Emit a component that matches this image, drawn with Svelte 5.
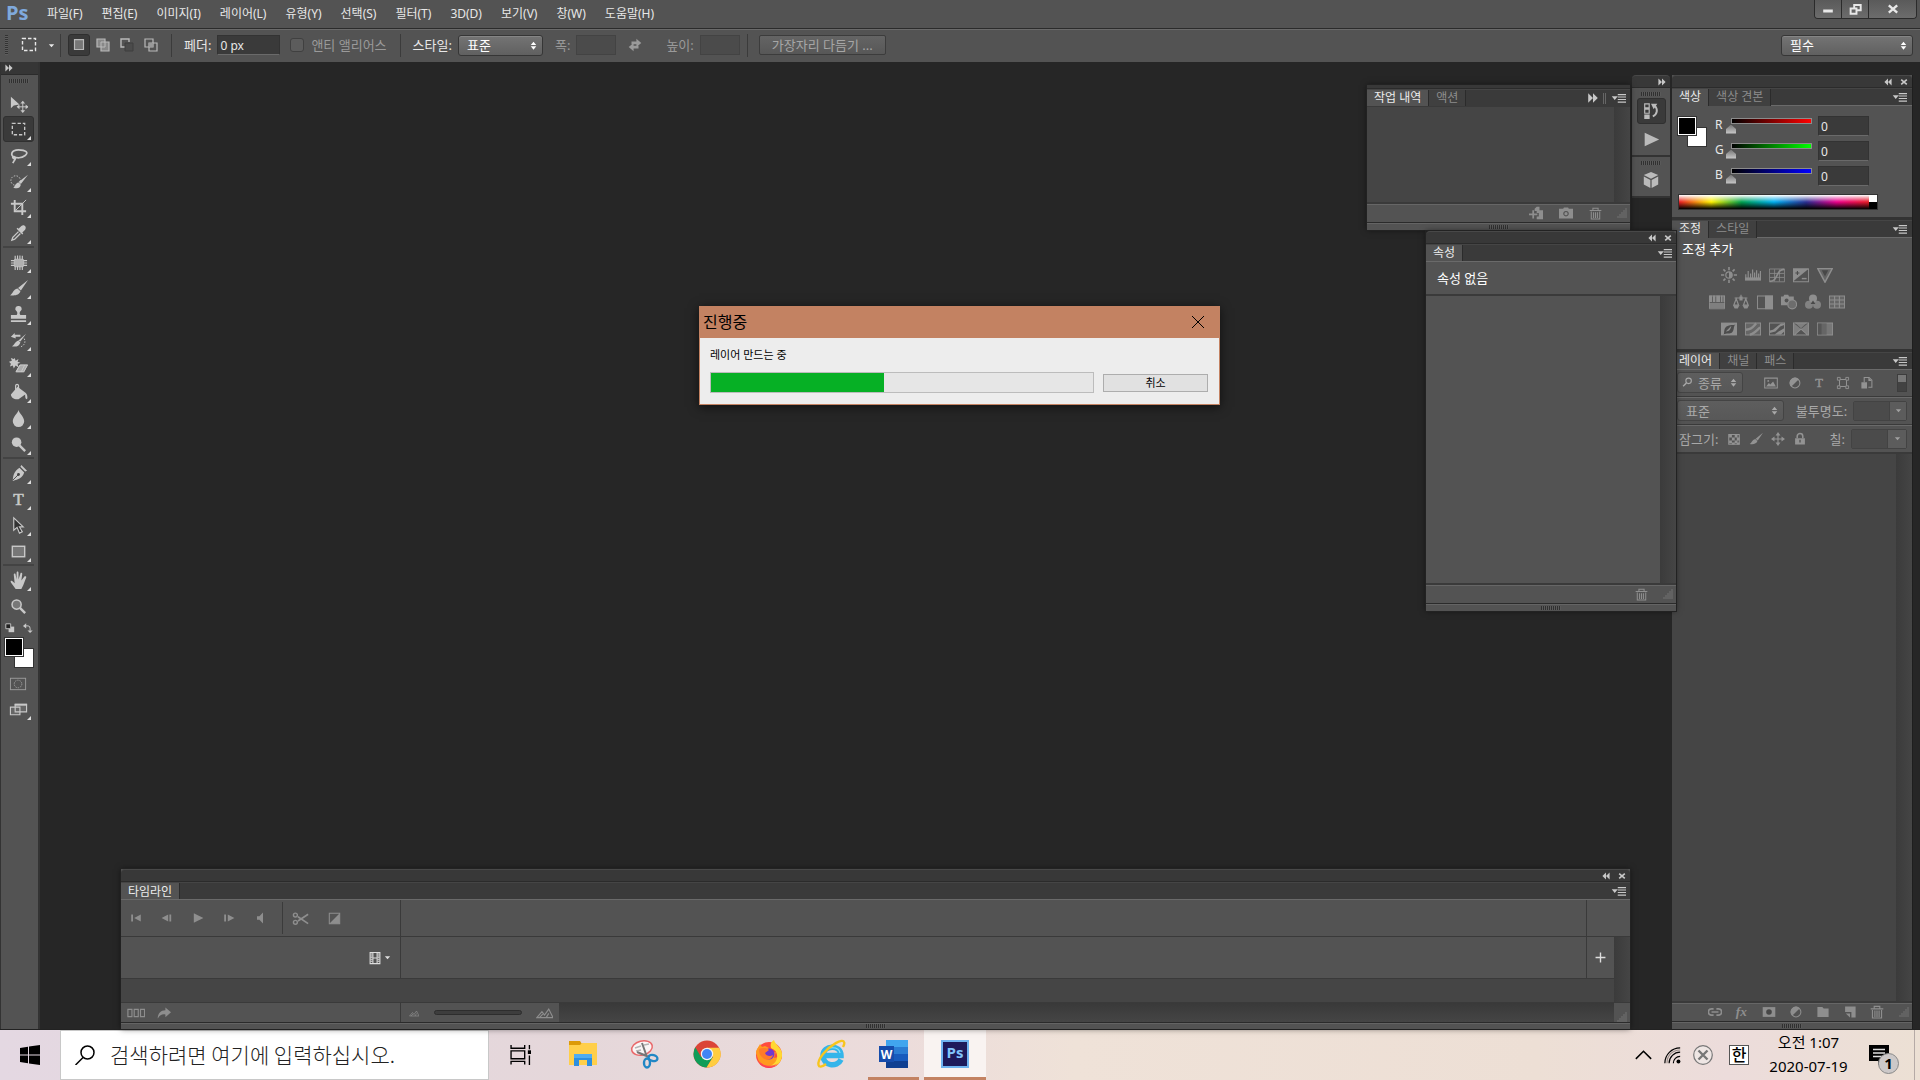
<script lang="ts">
  type Tool = { name: string; label: string; more?: boolean };

  const menus = [
    '파일(F)', '편집(E)', '이미지(I)', '레이어(L)', '유형(Y)', '선택(S)',
    '필터(T)', '3D(D)', '보기(V)', '창(W)', '도움말(H)',
  ];

  // Toolbox, split where the separators go.
  const toolGroups: Tool[][] = [
    [
      { name: 'move', label: '이동' },
      { name: 'marquee', label: '사각형 선택 윤곽', more: true },
      { name: 'lasso', label: '올가미', more: true },
      { name: 'quick', label: '빠른 선택', more: true },
      { name: 'crop', label: '자르기', more: true },
      { name: 'eyedropper', label: '스포이드', more: true },
    ],
    [
      { name: 'heal', label: '스팟 복구 브러시', more: true },
      { name: 'brush', label: '브러시', more: true },
      { name: 'stamp', label: '복제 도장', more: true },
      { name: 'history', label: '작업 내역 브러시', more: true },
      { name: 'eraser', label: '지우개', more: true },
      { name: 'bucket', label: '페인트 통', more: true },
      { name: 'drop', label: '흐림 효과', more: true },
      { name: 'dodge', label: '닷지', more: true },
    ],
    [
      { name: 'pen', label: '펜', more: true },
      { name: 'type', label: '문자', more: true },
      { name: 'select', label: '패스 선택', more: true },
      { name: 'rect', label: '사각형', more: true },
    ],
    [
      { name: 'hand', label: '손', more: true },
      { name: 'zoom', label: '돋보기' },
    ],
  ];

  const adjustments = [
    ['sun', 'levels', 'curves', 'exposure', 'vibrance'],
    ['hue', 'balance', 'bw', 'photo', 'mixer', 'lookup'],
    ['invert', 'poster', 'threshold', 'selective', 'gradient'],
  ];

  const filters = ['image', 'adjust', 'type', 'shape', 'smart'];
  const locks = ['checker', 'brush', 'cross', 'lock'];
  const layerActions = ['link', 'fx', 'mask', 'adjust', 'folder', 'newpage', 'trash'];
  const transport = ['first', 'prev', 'play', 'next', 'speaker'];
  const apps = ['explorer', 'snip', 'chrome', 'firefox', 'ie', 'word', 'ps'];

  let activeTool = $state('marquee');
  let rgb = $state([
    { key: 'R', value: 0 },
    { key: 'G', value: 0 },
    { key: 'B', value: 0 },
  ]);

  // Glyph bodies, all on a 20 x 20 box.
  const icons: Record<string, string> = {
    move: '<path fill="currentColor" d="M2 3v12l3-3 6-1z"/><path stroke="currentColor" d="M14.500 8v11M9 13.500h11"/><path fill="currentColor" d="M14.500 7l2.500 3h-5zM14.500 20l2.500-3h-5zM8 13.500l3-2.500v5zM20.500 13.500l-3-2.500v5z"/>',
    marquee: '<rect x="3.500" y="3.500" width="13" height="12" fill="none" stroke="currentColor" stroke-width="1.400" stroke-dasharray="3.500 2"/>',
    lasso: '<path fill="none" stroke="currentColor" stroke-width="1.800" d="M6 12C1 10 2 4 10 4s11 3 7 6-9 3-12 1c-2-1-1 3 1 2s-1 3-2 5"/>',
    quick: '<circle cx="7" cy="9" r="5" fill="none" stroke="currentColor" stroke-dasharray="1.500 1.500"/><path fill="currentColor" d="M20 3l-7.500 9.500-2.500-2zM10 11l2.500 2.500c-1 4-4 4-8 3 2-1 2-5 5.500-5.500z"/>',
    crop: '<path fill="none" stroke="currentColor" stroke-width="2" d="M6 2v12h12M2 6h12v12"/><path stroke="currentColor" d="M7 13L18 2"/>',
    eyedropper: '<path fill="currentColor" d="M13 2c3-2 6 1 4 4l-3 3 1 1-1 1-6-6 1-1 1 1z"/><path fill="none" stroke="currentColor" stroke-width="1.400" d="M10 8l-6 6-1 3 3-1 6-6"/>',
    heal: '<rect x="5" y="6" width="11" height="9" rx="2" fill="currentColor" opacity=".8"/><path stroke="currentColor" stroke-width="1.200" d="M6.500 3v4M9 2.500v4M11.500 2.500v4M14 3v4M6.500 14v4M9 14v4M11.500 14v4M14 14v4M2 8h4M2 10.500h4M2 13h4M15 8h4M15 10.500h4M15 13h4"/>',
    brush: '<path fill="currentColor" d="M20 1l-7.500 11-3-2.500zM9 10l3 3c-1 4-6 5-11 4 3-1 3-6 8-7z"/>',
    stamp: '<path fill="currentColor" d="M10 1a3 3 0 0 1 2 5.500c-1 1-1 3 0 4h6v4H2v-4h6c1-1 1-3 0-4A3 3 0 0 1 10 1zM2 16h16v2H2z"/>',
    history: '<path fill="currentColor" d="M18 3l-6 8-2-1zM10 10l2 2c-1 4-5 5-9 4 3-1 3-5 7-6zM2 6l4-4v2h6v2H7v2z"/><path fill="none" stroke="currentColor" stroke-dasharray="1.500 1.500" d="M16 8c2 4 0 8-5 9"/>',
    eraser: '<path fill="currentColor" d="M6 1l1 3 3-2-1 3 3 1-3 1 1 4-3-2-2 3-1-3-3 1 1-3-2-2 3-1-1-3 3 1z"/><path fill="currentColor" opacity=".75" d="M12 8h8l-4 8H7z"/><path fill="none" stroke="currentColor" d="M11.500 8.500h8l-4 7h-8zM7.500 15.500l4-7M13 15.500l3.500-7"/>',
    bucket: '<path fill="currentColor" d="M9 4l8 6c2 1 3 5 2 7-2 0-2-3-2-5l-7 5c-4 1-8-2-8-5z"/><path fill="none" stroke="currentColor" stroke-width="1.300" d="M10 10V3c0-2-3-2-3 0v4"/>',
    drop: '<path fill="currentColor" d="M10 1c1 4 6 7 6 12a6 6 0 0 1-12 0C4 8 9 5 10 1z"/>',
    dodge: '<circle cx="8" cy="7.500" r="5" fill="currentColor"/><path stroke="currentColor" stroke-width="2.500" d="M11 11l6 6"/>',
    pen: '<path fill="currentColor" d="M13 1l6 6-2 1-5-5zM11 4l5 5c-2 6-6 7-12 9 0-6 2-11 7-14z"/><path stroke="#444" d="M4 17l6-6"/><circle cx="10" cy="11" r="1.500" fill="#444"/>',
    type: '<text x="10" y="16" text-anchor="middle" font-family="Liberation Serif" font-size="18" fill="currentColor" stroke="currentColor" stroke-width=".6">T</text>',
    select: '<path fill="#333" stroke="currentColor" stroke-width="1.200" d="M5 2v13l3.500-3 2.500 6 3-1.500-3-5h4z"/>',
    rect: '<rect x="3.500" y="4.500" width="13" height="11" fill="#777" stroke="currentColor" stroke-width="1.500"/>',
    hand: '<path fill="currentColor" d="M7 19L2 12c-1-2 1-2 2-1l2 2-1-9c0-2 2-2 2 0l1 5V2c0-2 2-2 2 0v7l2-6c0-2 2-1 2 0l-1 7 3-4c1-1 3 0 2 1l-3 8-2 4z"/>',
    zoom: '<circle cx="8" cy="8" r="4.800" fill="#777" stroke="currentColor" stroke-width="1.600"/><path stroke="currentColor" stroke-width="2.500" d="M11.500 11.500L17 17"/>',
    defaults: '<path fill="currentColor" d="M8 8h8v8H8z"/><path fill="#222" stroke="currentColor" stroke-width="1.300" d="M4 4h7v7H4z"/>',
    swap: '<path fill="none" stroke="currentColor" stroke-width="1.500" d="M7 6h4q3 0 3 4v3"/><path fill="currentColor" d="M3 6l5-4v8zM14 17l-4-4h8z"/>',
    quickmask: '<rect x="1.500" y="4.500" width="16" height="12" fill="none" stroke="currentColor"/><circle cx="9.500" cy="10.500" r="4" fill="none" stroke="currentColor" stroke-dasharray="1.500 1"/>',
    screen: '<path fill="#666" stroke="currentColor" stroke-width="1.200" d="M1.500 7.500h10v8h-10zM6.500 4.500h12v8h-12z"/><path stroke="currentColor" stroke-width="2" d="M6 5h13"/>',
    selNew: '<path fill="#777" stroke="currentColor" stroke-width="1.300" d="M5 4h10v11H5z"/>',
    selAdd: '<path fill="#888" stroke="currentColor" stroke-width="1.200" d="M4 4h8v3h4v9H8v-4H4z"/><path fill="none" stroke="currentColor" d="M8 7h4v5H8z"/>',
    selSub: '<path fill="none" stroke="currentColor" stroke-width="1.400" d="M8 12H4V4h8v3"/><path fill="#4b4b4b" stroke="#3f3f3f" d="M8 8h8v8H8z"/>',
    selInt: '<path fill="none" stroke="currentColor" stroke-width="1.200" d="M4 4h8v8H4zM8 8h8v8H8z"/><path fill="#999" d="M8 8h4v4H8z"/>',
    exchange: '<path fill="currentColor" d="M5 5h7V1l7 6-7 6V9H5zM15 15H8v4l-7-6 7-6v4h7z"/>',
    dblRight: '<path fill="currentColor" d="M4 4l6 6-6 6zM10 4l6 6-6 6z"/>',
    dblLeft: '<path fill="currentColor" d="M16 4l-6 6 6 6zM10 4l-6 6 6 6z"/>',
    close: '<path stroke="currentColor" stroke-width="4" d="M3 4l14 12M17 4L3 16"/>',
    menu: '<path fill="currentColor" d="M1 7h8l-4 5zM9 4h11v1.500H9zM9 7.300h11v1.500H9zM9 10.600h11v1.500H9zM9 14h11v1.500H9z"/>',
    caret: '<path fill="currentColor" d="M4 7h12l-6 7z"/>',
    spin: '<path fill="currentColor" d="M5 9l5-6 5 6zM5 11.500h10l-5 6z"/>',
    steps: '<path fill="none" stroke="currentColor" stroke-width="1.300" d="M3 2h5v4.500H3zM3 8h5v4.500H3z"/><path fill="currentColor" d="M2.500 14H8.500v5H2.500zM10 2h7L13 8z"/><path fill="none" stroke="currentColor" stroke-width="2.200" d="M14 4c4 4 3 10-2 12"/>',
    action: '<path fill="currentColor" d="M2 2l17 8-17 8z"/>',
    cube: '<path fill="currentColor" d="M10 1l8 3.500-8 4-8-4zM2 6l7.300 4v9L2 15zM18 6l-7.300 4v9L18 15z"/>',
    docplus: '<path fill="currentColor" d="M11 1h4v5h5v13h-9v-4h3v-5h-3V7H8V4z"/><path stroke="currentColor" stroke-width="2.500" d="M0 12h12M6 6v12"/>',
    camera: '<path fill="currentColor" fill-rule="evenodd" d="M0 4h6l1-2h6l1 2h6v14H0zM10 7a4 4 0 1 0 .01 0z"/><circle cx="10" cy="11" r="2.300" fill="currentColor"/>',
    trash: '<path fill="none" stroke="currentColor" stroke-width="1.600" d="M1 5.500h18M6 5V2h8v3M3.500 7v11.500h13V7M7 8v9M10 8v9M13 8v9"/>',
    corner: '<path fill="currentColor" d="M17 1h2v2h-2zM17 5h2v2h-2zM13 5h2v2h-2zM17 9h2v2h-2zM13 9h2v2h-2zM9 9h2v2H9zM17 13h2v2h-2zM13 13h2v2h-2zM9 13h2v2H9zM5 13h2v2H5zM17 17h2v2h-2zM13 17h2v2h-2zM9 17h2v2H9zM5 17h2v2H5zM1 17h2v2H1z"/>',
    sun: '<circle cx="10" cy="10" r="4" fill="none" stroke="currentColor" stroke-width="1.500"/><path fill="currentColor" d="M10 6a4 4 0 0 1 0 8z"/><path stroke="currentColor" stroke-width="2" d="M10 0v4M10 16v4M0 10h4M16 10h4M3 3l2.500 2.500M14.500 14.500L17 17M3 17l2.500-2.500M14.500 5.500L17 3"/>',
    levels: '<path fill="currentColor" d="M0 13h20v4H0z"/><path stroke="currentColor" stroke-width="1.500" d="M1 14V9M4 14V5M7 14V8M9.500 14V3M12 14V7M14.500 14V4M17 14V8M19.300 14V5"/>',
    curves: '<path fill="none" stroke="currentColor" d="M.5 2.500h19v16H.5zM7 3v15M13 3v15M1 8h18M1 13h18"/><path fill="none" stroke="currentColor" stroke-width="2" d="M1 18c11 0 7-15 18-15"/>',
    exposure: '<path fill="currentColor" d="M0 2h20L0 18z"/><path fill="none" stroke="currentColor" stroke-width="1.300" d="M.5 2.500h19v16H.5z"/><path stroke="#4b4b4b" stroke-width="1.300" d="M3 7.500h5M5.500 5v5"/><path stroke="currentColor" stroke-width="1.800" d="M11 14.500h6"/>',
    vibrance: '<path fill="#666" stroke="currentColor" stroke-width="1.800" d="M1 2h18l-9 17z"/><path fill="#484848" d="M6 4h8l-4 8z"/>',
    hue: '<path fill="currentColor" d="M0 11h20v7H0z" opacity=".75"/><path fill="currentColor" d="M0 2h4v8H0zM5 2h3v8H5zM9 2h5v8H9zM15 2h2v8h-2zM18 2h2v8h-2z"/><path fill="none" stroke="currentColor" d="M.5 2.500h19v16H.5z"/>',
    balance: '<path fill="none" stroke="currentColor" stroke-width="1.500" d="M2 5h16M10 1v5M4 6l-3 8h6zM16 6l-3 8h6z"/><path fill="currentColor" d="M0 14h8l-2 4H2zM12 14h8l-2 4h-4zM8 3h4v5H8z"/>',
    bw: '<path fill="none" stroke="currentColor" stroke-width="1.400" d="M.5 2.500h19v16H.5z"/><path fill="currentColor" d="M10 2h10v17H10z"/>',
    photo: '<path fill="currentColor" d="M0 3h3l1-2h5l1 2h6v5a6 6 0 0 0-8 6H0z"/><circle cx="7" cy="8" r="2.500" fill="#535353"/><circle cx="14" cy="13" r="5.500" fill="#6d6d6d" stroke="currentColor" stroke-width="1.500"/>',
    mixer: '<circle cx="10" cy="5.500" r="5" fill="currentColor"/><circle cx="5" cy="13.500" r="5" fill="currentColor" opacity=".8"/><circle cx="15" cy="13.500" r="5" fill="currentColor" opacity=".8"/><path fill="#484848" d="M10 8l3 4.500H7z"/>',
    lookup: '<path fill="#666" stroke="currentColor" stroke-width="1.400" d="M.5 2.500h19v15H.5zM7 2v16M13 2v16M1 7.500h18M1 12.500h18"/>',
    invert: '<path fill="currentColor" d="M0 2h20v16H0z"/><path fill="#4c4c4c" d="M3 17c2-1-1-9 6-11s6 0 9-2c-3 3-1 7-4 10s-7 0-11 3z"/><path fill="currentColor" d="M6 13l7-7c-1 4-2 7-7 7z"/>',
    poster: '<path fill="#666" stroke="currentColor" stroke-width="1.300" d="M.5 2.500h19v15H.5z"/><path fill="none" stroke="currentColor" stroke-width="3" d="M1 11c8 0 10-5 13-8M6 17c6-1 9-6 13-9"/>',
    threshold: '<path fill="none" stroke="currentColor" stroke-width="1.300" d="M.5 2.500h19v15H.5z"/><path fill="currentColor" d="M1 12l4-1 5-4 5-4h4v2l-5 2-6 6-7 2zM7 17l5-4 7-4v4l-4 4z"/>',
    selective: '<path fill="currentColor" d="M0 2v16l10-8zM20 2v16l-10-8zM2 2h16l-8 7z" opacity=".75"/><path fill="none" stroke="currentColor" stroke-width="1.300" d="M.5 2.500h19v15H.5zM1 18l9-8 9 8"/>',
    gradient: '<path fill="#777" stroke="currentColor" stroke-width="1.300" d="M.5 2.500h19v15H.5z"/><path fill="#555" d="M1 3h5v14H1z"/><path fill="#666" d="M6 3h6v14H6z"/>',
    search: '<circle cx="12" cy="7" r="5" fill="none" stroke="currentColor" stroke-width="2"/><path stroke="currentColor" stroke-width="2.500" d="M8 11l-6 6"/>',
    image: '<path fill="none" stroke="currentColor" stroke-width="1.500" d="M1 3h18v14H1z"/><path fill="currentColor" d="M3 15l4-5 2 2 4-4 4 7z"/><circle cx="6" cy="7" r="1.300" fill="currentColor"/>',
    adjust: '<circle cx="10" cy="10" r="7" fill="none" stroke="currentColor" stroke-width="1.500"/><path fill="currentColor" d="M15.500 4.500A7.500 7.500 0 1 0 4.500 15.500z"/>',
    shape: '<path fill="none" stroke="currentColor" stroke-width="1.400" d="M5 5h10v10H5z"/><path fill="#535353" stroke="currentColor" stroke-width="1.300" d="M2 2h4v4H2zM14 2h4v4h-4zM2 14h4v4H2zM14 14h4v4h-4z"/>',
    smart: '<path fill="none" stroke="currentColor" stroke-width="1.500" d="M6 9V2h7l4 4v10h-5"/><path fill="currentColor" d="M2 9h8v9H2zM12 2v5h5z"/>',
    checker: '<path fill="none" stroke="currentColor" stroke-width="1.500" d="M2.500 3.500h15v14h-15z"/><path fill="currentColor" d="M3 4h4v4H3zM11 4h4v4h-4zM7 8h4v4H7zM14 8h4v4h-4zM3 12h4v4H3zM11 12h4v4h-4zM7 15h4v3H7zM14 15h4v3h-4z"/>',
    cross: '<path stroke="currentColor" stroke-width="1.600" d="M10 3v14M3 10h14"/><path fill="currentColor" d="M10 0l3.500 5h-7zM10 20l3.500-5h-7zM0 10l5-3.500v7zM20 10l-5-3.500v7z"/>',
    lock: '<path fill="currentColor" fill-rule="evenodd" d="M3 9h14v9H3zM9 11v4h2v-4z"/><path fill="none" stroke="currentColor" stroke-width="2.200" d="M6 9V6c0-5 8-5 8 0v3"/>',
    link: '<path fill="none" stroke="currentColor" stroke-width="2.400" d="M8 14.500H5a4.500 4.500 0 0 1 0-9h3M12 5.500h3a4.500 4.500 0 0 1 0 9h-3M5 10h10"/>',
    fx: '<text x="9" y="15" text-anchor="middle" font-family="Liberation Serif" font-style="italic" font-weight="bold" font-size="19" fill="currentColor">fx</text>',
    mask: '<path fill="currentColor" d="M1 3h18v14H1z"/><circle cx="10" cy="10" r="4" fill="#474747"/>',
    folder: '<path fill="currentColor" d="M2 3h7l2 2h7v12H2z"/>',
    newpage: '<path fill="currentColor" d="M3 2h15v16h-6v-8H3z"/><path fill="currentColor" d="M4 12h6v6z"/>',
    first: '<path fill="currentColor" d="M2 4h3v12H2zM18 4v12L7 10z"/>',
    prev: '<path fill="currentColor" d="M12 4v12L1 10zM14 4h3v12h-3z"/>',
    play: '<path fill="currentColor" d="M3 2l16 8-16 8z"/>',
    next: '<path fill="currentColor" d="M2 4h3v12H2zM8 4l11 6-11 6z"/>',
    speaker: '<path fill="currentColor" d="M5 7h4l6-6v18l-6-6H5z"/>',
    scissors: '<path fill="none" stroke="currentColor" stroke-width="2" d="M7 8l12 8M7 13l12-8"/><circle cx="4" cy="6" r="2.300" fill="none" stroke="currentColor" stroke-width="1.700"/><circle cx="4" cy="14.500" r="2.300" fill="none" stroke="currentColor" stroke-width="1.700"/>',
    transition: '<path fill="none" stroke="currentColor" stroke-width="1.600" d="M2 2h16v16H2z"/><path fill="currentColor" d="M18 2v16H2z"/>',
    film: '<path fill="none" stroke="currentColor" stroke-width="1.500" d="M3 2h14v16H3zM7 2v16M13 2v16M7 10h6"/><path stroke="currentColor" stroke-width="3" stroke-dasharray="1.500 1.500" d="M5 2v16M15 2v16"/>',
    frames: '<path fill="none" stroke="currentColor" stroke-width="1.300" d="M1 6h4.500v8H1zM8 6h4.500v8H8zM15 6h4.500v8H15z"/>',
    share: '<path fill="currentColor" d="M12 2l8 7-8 7v-4c-5-1-8 1-11 6C1 11 5 6 12 6z"/>',
    peaks: '<path fill="none" stroke="currentColor" stroke-width="1.400" d="M1 16l6-7 3 4 5-7 5 10zM4 16l4-4M12 16l3-5"/>',
    plus: '<path stroke="currentColor" stroke-width="2.500" d="M10 1v18M1 10h18"/>',
    min: '<path fill="currentColor" d="M2 11h16v5H2z"/>',
    restore: '<path fill="none" stroke="currentColor" stroke-width="3" d="M8 7V3h10v8h-5M2.500 8.500h9v8h-9z"/>',
    start: '<path fill="currentColor" d="M0 3l8-1.200v7.700H0zM9 1.600L20 0v9.500H9zM0 10.500h8v7.700L0 17zM9 10.500h11V20L9 18.400z"/>',
    find: '<circle cx="12.500" cy="7.500" r="6.500" fill="none" stroke="currentColor" stroke-width="1.500"/><path stroke="currentColor" stroke-width="1.500" d="M8 12.500L.5 20"/>',
    taskview: '<path fill="none" stroke="currentColor" stroke-width="1.300" d="M1 1v3h13V1M1 6.500h13v7.500H1zM1 19.500v-3h13v3M18.500 1v4M18.500 11v9"/><path fill="currentColor" d="M17 6h3v3.500h-3z"/>',
    chevron: '<path fill="none" stroke="currentColor" stroke-width="1.800" d="M1 14l9-9 9 9"/>',
    wifi: '<g fill="none" stroke="currentColor" stroke-width="1.400"><path d="M1 19C1 9 9 1 19 1M6 19C6 12 12 6 19 6M11 19c0-4.500 3.500-8 8-8"/><path stroke="#998d89" d="M3.500 19C3.500 10 10 3.500 19 3.500"/></g><circle cx="17" cy="17" r="2.300" fill="currentColor"/>',
    blocked: '<circle cx="10" cy="10" r="9.300" fill="#eee6e4" stroke="#777" stroke-width="1.200"/><path stroke="#777" stroke-width="2.400" d="M5.500 5.500l9 9M14.500 5.500l-9 9"/>',
    notice: '<path fill="currentColor" d="M0 0h20v16h-7l-4 4v-4H0z"/><path stroke="#ddd" stroke-width="1.300" d="M4 4.500h12M4 8h12M4 11.500h12"/>',
  };

  // Taskbar applications, on a 28 x 28 box.
  const appIcons: Record<string, string> = {
    explorer: '<path fill="#dc9a08" d="M0 1h11l2 3v4H0z"/><path fill="#ffcf4a" d="M0 5h11l2-2h15v22H0z"/><path fill="#2d8fe0" d="M5 26V14h18v12h-5v-6h-8v6z"/><path fill="#4fadf2" d="M5 14h18v4H5z"/>',
    snip: '<ellipse cx="11" cy="8" rx="10.500" ry="7" transform="rotate(-14 11 8)" fill="#faf5f5" stroke="#e9696b" stroke-width="1.500"/><path stroke="#b5b5b5" stroke-width="1.500" d="M4 8l6-2M5 11l5-1M13 5l5-1"/><path stroke="#777" stroke-width="2" d="M11 3l5 14M6 12l12 5"/><g fill="none" stroke="#2187c5" stroke-width="2.400"><ellipse cx="22" cy="18" rx="4.500" ry="3" transform="rotate(15 22 18)"/><ellipse cx="16" cy="23" rx="3" ry="4.500"/></g>',
    chrome: '<circle cx="14" cy="14" r="13.500" fill="#db4437"/><path fill="#0f9d58" d="M2.300 7.300A13.500 13.500 0 0 0 13.500 27.500L20 17 8 17z"/><path fill="#ffcd40" d="M14 7.800h12.200A13.500 13.500 0 0 1 13.500 27.500L20 17z"/><circle cx="14" cy="14" r="6.200" fill="#f4f4f4"/><circle cx="14" cy="14" r="5" fill="#4285f4"/>',
    firefox: '<circle cx="14" cy="15" r="13" fill="#ff4b3e"/><path fill="#ff9a1f" d="M1 13C1 9 4 7 5 4l2 3 3-1 4 2-3 3 5 2 5-1-2 6 8-2A13 13 0 0 1 4 22z"/><path fill="#ffd832" d="M16 8c-1-4 0-6 3-8 1 5 9 8 8 16-1 9-8 11-14 11 6-2 10-7 9-12s-3-5-6-7z"/><circle cx="14" cy="14" r="5.500" fill="#7139cf"/><path fill="#ff7b2a" d="M4 9c3-1 7-2 10 1l-4 3c1 3 5 4 8 2-1 5-7 6-10 3s-4-4-4-9z"/><path fill="#ff365e" d="M3 20c5 7 15 7 20 3-5 7-16 7-20-3z" opacity=".8"/>',
    ie: '<path fill="none" stroke="#35b5ea" stroke-width="5.500" d="M24 19.500C20 28 6 26 6 15.500S24 4 24 15.500H7"/><path fill="none" stroke="#8be4fb" stroke-width="1.200" d="M8 13c1-7 14-7 15 0"/><path fill="none" stroke="#f7c51e" stroke-width="2.400" d="M9 24C0 31-1 23 6 14S26-2 27 2c1 1 0 3-1 5"/>',
    word: '<path fill="#41a5ee" d="M7 0h22v8H7z"/><path fill="#2b7cd3" d="M7 7h22v7H7z"/><path fill="#185abd" d="M7 14h22v7H7z"/><path fill="#103f91" d="M7 21h22v7H7z"/><path fill="#164cab" d="M0 6h15v16H0z"/><text x="7.500" y="18.500" text-anchor="middle" font-family="Open Sans" font-size="12" font-weight="bold" fill="#fff">W</text>',
    ps: '<path fill="#1e1a5a" stroke="#6fb2ef" stroke-width="2" d="M1 1h26v26H1z"/><text x="14" y="18" text-anchor="middle" font-family="Open Sans" font-size="15" font-weight="bold" fill="#82c4fa">Ps</text>',
  };
</script>

{#snippet icon(name: string, size = 16)}
  <svg width={size} height={size} viewBox="0 0 20 20" aria-hidden="true">{@html icons[name]}</svg>
{/snippet}

{#snippet panelMenu()}
  <button class="bare" aria-label="패널 메뉴">{@render icon('menu', 15)}</button>
{/snippet}

{#snippet windowBar()}
  <div class="winbar">
    <button class="bare" aria-label="축소">{@render icon('dblLeft', 12)}</button>
    <button class="bare" aria-label="닫기">{@render icon('close', 8)}</button>
  </div>
{/snippet}

{#snippet tabs(names: string[])}
  <div class="tabbar" role="tablist">
    {#each names as name, i}
      <button class="tab" class:current={i === 0} role="tab" aria-selected={i === 0}>{name}</button>
    {/each}
    <span class="grow"></span>
    {@render panelMenu()}
  </div>
{/snippet}

<div class="screen">
  <header class="menubar">
    <span class="logo">Ps</span>
    <nav>
      {#each menus as item}
        <button class="bare">{item}</button>
      {/each}
    </nav>
    <span class="grow"></span>
    <div class="winbuttons">
      <button aria-label="최소화">{@render icon('min', 12)}</button>
      <button aria-label="이전 크기로">{@render icon('restore', 13)}</button>
      <button class="wide" aria-label="닫기">{@render icon('close', 12)}</button>
    </div>
  </header>

  <div class="options">
    <span class="grip-v"></span>
    <button class="bare preset" aria-label="도구 사전 설정">
      {@render icon('marquee', 20)}
      {@render icon('caret', 9)}
    </button>
    <span class="rule"></span>
    <div class="modes">
      <button class="mode on" aria-label="새 선택 영역">{@render icon('selNew', 18)}</button>
      <button class="mode" aria-label="추가">{@render icon('selAdd', 20)}</button>
      <button class="mode" aria-label="빼기">{@render icon('selSub', 20)}</button>
      <button class="mode" aria-label="교차">{@render icon('selInt', 20)}</button>
    </div>
    <span class="rule"></span>
    <label class="pair">페더:<input class="field feather" value="0 px" /></label>
    <label class="pair dim anti"><input type="checkbox" disabled />앤티 앨리어스</label>
    <span class="rule"></span>
    <label class="pair">
      스타일:
      <span class="drop style">
        <select><option>표준</option></select>
        {@render icon('spin', 11)}
      </span>
    </label>
    <label class="pair dim">폭:<input class="field small" disabled /></label>
    <button class="bare dim swap" aria-label="폭과 높이 바꾸기">{@render icon('exchange', 14)}</button>
    <label class="pair dim">높이:<input class="field small" disabled /></label>
    <span class="rule"></span>
    <button class="refine" disabled>가장자리 다듬기 ...</button>
    <span class="grow"></span>
    <span class="drop workspace-pick">
      <select aria-label="작업 영역"><option>필수</option></select>
      {@render icon('spin', 11)}
    </span>
  </div>

  <main class="workspace">
    <aside class="toolbox">
      <div class="toolhead">{@render icon('dblRight', 12)}</div>
      <span class="grip top"></span>
      {#each toolGroups as group}
        <div class="toolgroup">
          {#each group as tool}
            <button
              class="tool"
              class:active={activeTool === tool.name}
              class:more={tool.more}
              aria-label={tool.label}
              onclick={() => (activeTool = tool.name)}
            >
              {@render icon(tool.name, 19)}
            </button>
          {/each}
        </div>
      {/each}
      <div class="mini">
        <button class="bare" aria-label="기본 색상">{@render icon('defaults', 14)}</button>
        <button class="bare" aria-label="색상 교체">{@render icon('swap', 13)}</button>
      </div>
      <div class="swatches">
        <button class="swatch back" aria-label="배경색"></button>
        <button class="swatch fore" aria-label="전경색"></button>
      </div>
      <button class="tool muted" aria-label="빠른 마스크">{@render icon('quickmask', 19)}</button>
      <button class="tool more" aria-label="화면 모드">{@render icon('screen', 19)}</button>
    </aside>

    <div class="docks">
      <div class="iconcol">
        <div class="winbar">
          <button class="bare" aria-label="확장">{@render icon('dblRight', 12)}</button>
        </div>
        <div class="iconset">
          <span class="grip"></span>
          <button class="dockicon on" aria-label="작업 내역">{@render icon('steps', 18)}</button>
          <button class="dockicon" aria-label="액션">{@render icon('action', 17)}</button>
        </div>
        <div class="iconset">
          <span class="grip"></span>
          <button class="dockicon" aria-label="3D">{@render icon('cube', 18)}</button>
        </div>
      </div>

      <div class="dock">
        {@render windowBar()}
        <section>
          {@render tabs(['색상', '색상 견본'])}
          <div class="color">
            <div class="swatches compact">
              <button class="swatch back" aria-label="배경색"></button>
              <button class="swatch fore" aria-label="전경색"></button>
            </div>
            <div class="channels">
              {#each rgb as channel}
                <div class="channel {channel.key}">
                  <label for="ch-{channel.key}">{channel.key}</label>
                  <div class="slide">
                    <span class="ramp"></span>
                    <input type="range" min="0" max="255" aria-label={channel.key} bind:value={channel.value} />
                  </div>
                  <input class="field" id="ch-{channel.key}" bind:value={channel.value} />
                </div>
              {/each}
            </div>
            <div class="spectrum"><span class="hues"></span><span class="ends"></span></div>
          </div>
        </section>

        <section>
          {@render tabs(['조정', '스타일'])}
          <div class="adjust">
            <p>조정 추가</p>
            {#each adjustments as row}
              <div class="adjrow">
                {#each row as name}
                  <button class="bare" aria-label={name}>{@render icon(name, 16)}</button>
                {/each}
              </div>
            {/each}
          </div>
        </section>

        <section class="layers">
          {@render tabs(['레이어', '채널', '패스'])}
          <div class="line">
            <span class="drop kind">
              {@render icon('search', 11)}
              <select aria-label="필터 종류" disabled><option>종류</option></select>
              {@render icon('spin', 11)}
            </span>
            <div class="filters">
              {#each filters as name}
                <button class="bare" aria-label={name}>{@render icon(name, 14)}</button>
              {/each}
            </div>
            <button class="switch" aria-label="필터 켜기"></button>
          </div>
          <div class="line">
            <span class="drop blend">
              <select aria-label="혼합 모드" disabled><option>표준</option></select>
              {@render icon('spin', 11)}
            </span>
            <span class="grow"></span>
            <label for="opacity">불투명도:</label>
            <span class="combo">
              <input id="opacity" disabled />
              <button aria-label="불투명도 조절" disabled>{@render icon('caret', 9)}</button>
            </span>
          </div>
          <div class="line">
            <span class="locklabel">잠그기:</span>
            <div class="locks">
              {#each locks as name}
                <button class="bare" aria-label={name}>{@render icon(name, 14)}</button>
              {/each}
            </div>
            <span class="grow"></span>
            <label for="fill">칠:</label>
            <span class="combo">
              <input id="fill" disabled />
              <button aria-label="칠 조절" disabled>{@render icon('caret', 9)}</button>
            </span>
          </div>
          <div class="list"><span class="track"></span></div>
          <div class="footer">
            <div class="actions">
              {#each layerActions as name}
                <button class="bare" aria-label={name}>{@render icon(name, 14)}</button>
              {/each}
            </div>
            {@render icon('corner', 10)}
          </div>
          <div class="base"><span class="grip"></span></div>
        </section>
      </div>
    </div>

    <section class="floating history">
      <div class="cap"></div>
      <div class="tabbar" role="tablist">
        <button class="tab current" role="tab" aria-selected="true">작업 내역</button>
        <button class="tab" role="tab" aria-selected="false">액션</button>
        <span class="grow"></span>
        <button class="bare" aria-label="축소">{@render icon('dblRight', 16)}</button>
        <span class="bars"></span>
        {@render panelMenu()}
      </div>
      <div class="list"><span class="track"></span></div>
      <div class="footer">
        <div class="actions">
          <button class="bare" aria-label="새 문서">{@render icon('docplus', 14)}</button>
          <button class="bare" aria-label="새 스냅숏">{@render icon('camera', 14)}</button>
          <button class="bare" aria-label="삭제">{@render icon('trash', 13)}</button>
        </div>
        {@render icon('corner', 10)}
      </div>
      <div class="base"><span class="grip"></span></div>
    </section>

    <section class="floating properties">
      {@render windowBar()}
      {@render tabs(['속성'])}
      <p>속성 없음</p>
      <div class="list light"><span class="track"></span></div>
      <div class="footer">
        <div class="actions">
          <button class="bare" aria-label="삭제">{@render icon('trash', 13)}</button>
        </div>
        {@render icon('corner', 10)}
      </div>
      <div class="base"><span class="grip"></span></div>
    </section>

    <section class="floating timeline">
      {@render windowBar()}
      {@render tabs(['타임라인'])}
      <div class="trow head">
        <div class="tleft transport">
          {#each transport as name}
            <button class="bare" aria-label={name}>{@render icon(name, 12)}</button>
          {/each}
          <span class="rule"></span>
          <button class="bare" aria-label="분할">{@render icon('scissors', 17)}</button>
          <button class="bare" aria-label="전환">{@render icon('transition', 13)}</button>
        </div>
        <div class="tmain"></div>
        <div class="tend wide"></div>
      </div>
      <div class="tbody">
        <div class="tcontent">
          <div class="trow media">
            <div class="tleft filmcell">
              <button class="bare" aria-label="미디어 추가">
                {@render icon('film', 14)}
                {@render icon('caret', 9)}
              </button>
            </div>
            <div class="tmain"></div>
            <div class="tend">
              <button class="bare" aria-label="추가">{@render icon('plus', 11)}</button>
            </div>
          </div>
          <div class="tempty"></div>
        </div>
        <span class="track"></span>
      </div>
      <div class="tfoot">
        <div class="tleft frames">
          <button class="bare" aria-label="프레임 애니메이션">{@render icon('frames', 18)}</button>
          <button class="bare" aria-label="비디오 렌더">{@render icon('share', 14)}</button>
        </div>
        <div class="tzoom">
          {@render icon('peaks', 10)}
          <span class="groove"></span>
          {@render icon('peaks', 17)}
        </div>
        <div class="hscroll"></div>
        <div class="tcorner">{@render icon('corner', 10)}</div>
      </div>
      <div class="base"><span class="grip"></span></div>
    </section>

    <div class="dialog" role="dialog" aria-label="진행중">
      <div class="title">
        <span>진행중</span>
        <button class="bare" aria-label="닫기">
          <svg width="14" height="14" viewBox="0 0 14 14"><path d="M1 1l12 12M13 1L1 13" stroke="#000" /></svg>
        </button>
      </div>
      <div class="body">
        <label for="job">레이어 만드는 중</label>
        <div class="jobrow">
          <progress id="job" value="173" max="382"></progress>
          <button>취소</button>
        </div>
      </div>
    </div>
  </main>

  <footer class="taskbar">
    <button class="bare start" aria-label="시작">{@render icon('start', 20)}</button>
    <label class="search">
      {@render icon('find', 20)}
      <input placeholder="검색하려면 여기에 입력하십시오." aria-label="검색" />
    </label>
    <button class="bare app" aria-label="작업 보기">{@render icon('taskview', 21)}</button>
    {#each apps as app}
      <button class="bare app" class:running={app === 'word'} class:front={app === 'ps'} aria-label={app}>
        <svg width="28" height="28" viewBox="0 0 28 28" overflow="visible">{@html appIcons[app]}</svg>
      </button>
    {/each}
    <span class="grow"></span>
    <div class="tray">
      <button class="bare" aria-label="숨겨진 아이콘">{@render icon('chevron', 17)}</button>
      <button class="bare" aria-label="네트워크">{@render icon('wifi', 17)}</button>
      <button class="bare" aria-label="소리">{@render icon('blocked', 20)}</button>
      <button class="bare ime">한</button>
    </div>
    <div class="clock"><span>오전 1:07</span><span>2020-07-19</span></div>
    <button class="bare notice" aria-label="알림">
      {@render icon('notice', 20)}
      <span class="badge">1</span>
    </button>
    <span class="peek"></span>
  </footer>
</div>

<style>
  :global(body) {
    margin: 0;
  }

  .screen {
    --face: #535353;
    --well: #454545;
    --edge: #2b2b2b;
    --shine: #6a6a6a;
    --dim: #8e8e8e;
    display: flex;
    flex-direction: column;
    height: 100vh;
    overflow: hidden;
    background: #262626;
    color: #e8e8e8;
    font: 13px/16px "Noto Sans", "Noto Sans CJK KR", sans-serif;
  }

  .screen * {
    box-sizing: border-box;
  }

  button,
  input,
  select {
    font: inherit;
    color: inherit;
    margin: 0;
  }

  p {
    margin: 0;
  }

  svg {
    display: block;
    flex: none;
  }

  .bare {
    display: flex;
    align-items: center;
    justify-content: center;
    padding: 0;
    border: 0;
    background: none;
    white-space: nowrap;
  }

  .grow {
    flex: 1;
  }

  .dim {
    color: #9a9a9a;
  }

  /* Menu bar */
  .menubar {
    display: flex;
    height: 29px;
    flex: none;
    background: var(--face);
    border-bottom: 1px solid var(--edge);
  }

  .logo {
    width: 47px;
    padding-left: 6px;
    color: #7fa9dc;
    font: 700 20px/25px "Open Sans", sans-serif;
  }

  .menubar nav {
    display: flex;
    gap: 19px;
    height: 28px;
    font-size: 12px;
  }

  .winbuttons {
    display: flex;
    height: 19px;
    margin-right: 3px;
    border: 1px solid var(--edge);
    border-top: 0;
    border-radius: 0 0 4px 4px;
    overflow: hidden;
  }

  .winbuttons button {
    display: grid;
    place-items: center;
    width: 27px;
    padding: 0;
    border: 0;
    border-right: 1px solid var(--edge);
    background: linear-gradient(#5a5a5a, #6c6c6c);
  }

  .winbuttons .wide {
    width: 47px;
    border-right: 0;
  }

  /* Options bar */
  .options {
    display: flex;
    align-items: center;
    height: 33px;
    flex: none;
    padding: 0 7px 2px 5px;
    background: var(--face);
    border-top: 1px solid var(--shine);
  }

  .grip-v {
    width: 3px;
    height: 20px;
    background: repeating-linear-gradient(#333 0 1px, #5d5d5d 1px 2px);
  }

  .preset {
    gap: 8px;
    width: 52px;
    padding-left: 6px;
  }

  .rule {
    width: 1px;
    height: 23px;
    background: #3b3b3b;
  }

  .modes {
    display: flex;
    width: 110px;
    padding-left: 7px;
    gap: 2px;
  }

  .mode {
    display: grid;
    place-items: center;
    width: 22px;
    height: 22px;
    padding: 0;
    border: 1px solid transparent;
    border-radius: 3px;
    background: none;
    color: #b9b9b9;
  }

  .mode.on {
    background: #3a3a3a;
    border-color: #2f2f2f;
  }

  .pair {
    display: flex;
    align-items: center;
    gap: 6px;
    padding-left: 12px;
    white-space: nowrap;
  }

  .pair.anti {
    gap: 7px;
    padding: 0 13px 0 10px;
  }

  .field {
    height: 20px;
    padding: 0 2px;
    border: 1px solid #333;
    border-bottom-color: var(--shine);
    background: #3a3a3a;
    font-size: 12px;
  }

  .field:disabled {
    background: #4b4b4b;
    border-color: #434343;
  }

  .feather {
    width: 63px;
  }

  .small {
    width: 40px;
  }

  input[type='checkbox'] {
    appearance: none;
    width: 14px;
    height: 14px;
    border: 1px solid #404040;
    border-radius: 3px;
    background: #5c5c5c;
  }

  .drop {
    display: flex;
    align-items: center;
    height: 21px;
    padding-right: 3px;
    border: 1px solid #363636;
    border-radius: 3px;
    background: linear-gradient(#747474, #606060);
    box-shadow: inset 0 1px #858585;
  }

  .drop select {
    flex: 1;
    min-width: 0;
    padding: 0 0 0 8px;
    border: 0;
    appearance: none;
    background: none;
  }

  .drop select:disabled {
    opacity: 1;
  }

  .style {
    width: 85px;
    color: #fff;
  }

  .swap {
    width: 38px;
  }

  .refine {
    width: 127px;
    height: 20px;
    margin-left: 11px;
    padding: 0;
    border: 1px solid #3c3c3c;
    border-radius: 2px;
    background: linear-gradient(#646464, #575757);
    color: #a6a6a6;
    line-height: 16px;
  }

  .dim + .rule {
    margin-left: 7px;
  }

  .anti + .rule {
    margin-left: 0;
  }

  .workspace-pick {
    width: 132px;
    color: #fff;
  }

  /* Workspace */
  .workspace {
    position: relative;
    display: flex;
    justify-content: space-between;
    flex: 1;
    min-height: 0;
  }

  .toolbox {
    display: flex;
    flex-direction: column;
    align-items: center;
    width: 40px;
    padding-right: 2px;
    border-right: 2px solid #333;
    border-left: 1px solid #333;
    background: var(--face);
    color: #c8c8c8;
  }

  .toolhead {
    align-self: stretch;
    height: 13px;
    margin-right: -2px;
    padding-left: 2px;
    background: #363636;
    border-bottom: 1px solid var(--edge);
  }

  .grip {
    width: 20px;
    height: 4px;
    flex: none;
    background: repeating-linear-gradient(90deg, #303030 0 1px, #5a5a5a 1px 2px);
  }

  .grip.top {
    margin: 4px 0 6px;
  }

  .toolgroup {
    padding-top: 1px;
  }

  .toolgroup + .toolgroup {
    border-top: 2px solid #434343;
  }

  .tool {
    position: relative;
    display: grid;
    place-items: center;
    width: 31px;
    height: 26px;
    padding: 0;
    border: 1px solid transparent;
    border-radius: 3px;
    background: none;
  }

  .tool.active {
    background: #3a3a3a;
    border-color: #303030;
  }

  .tool.more::after {
    content: '';
    position: absolute;
    right: 2px;
    bottom: 1px;
    border: 2px solid #ddd;
    border-top-color: transparent;
    border-left-color: transparent;
  }

  .tool.muted {
    color: #9b9b9b;
  }

  .mini {
    display: flex;
    gap: 4px;
    height: 18px;
  }

  .swatches {
    display: grid;
    width: 30px;
    height: 31px;
    margin-bottom: 2px;
  }

  .swatch {
    grid-area: 1 / 1;
    width: 20px;
    height: 20px;
    padding: 0;
    border: 1px solid #333;
  }

  .fore {
    background: #000;
    box-shadow: inset 0 0 0 1px #fff;
  }

  .back {
    place-self: end;
    background: #fff;
  }

  /* Docked panels */
  .docks {
    display: flex;
    align-items: flex-start;
    gap: 2px;
    height: 100%;
    padding: 13px 7px 0 0;
  }

  .winbar {
    display: flex;
    align-items: center;
    justify-content: flex-end;
    gap: 6px;
    height: 13px;
    flex: none;
    padding: 0 4px;
    border-top: 1px solid #484848;
    border-bottom: 1px solid var(--edge);
    border-radius: 4px 4px 0 0;
    background: #383838;
    color: #c8c8c8;
  }

  .iconcol {
    width: 38px;
  }

  .iconcol .winbar {
    padding-right: 2px;
  }

  .iconset {
    display: flex;
    flex-direction: column;
    align-items: center;
    padding: 4px 0 2px;
    border-bottom: 2px solid #333;
    background: var(--face);
    color: #bbb;
  }

  .iconset .grip {
    margin-bottom: 1px;
  }

  .dockicon {
    display: grid;
    place-items: center;
    width: 29px;
    height: 28px;
    padding: 0;
    border: 1px solid transparent;
    border-radius: 3px;
    background: none;
  }

  .dockicon.on {
    height: 26px;
    margin: 1px 0;
    background: #3a3a3a;
    border-color: #303030;
  }

  .dock {
    display: flex;
    flex-direction: column;
    width: 241px;
    height: 100%;
    background: var(--face);
    border-right: 1px solid #1e1e1e;
  }

  .dock section {
    border-bottom: 3px solid #333;
  }

  .tabbar {
    display: flex;
    align-items: center;
    height: 17px;
    flex: none;
    padding-right: 4px;
    background: #3a3a3a;
    border-top: 1px solid #454545;
    font-size: 12px;
    color: #c8c8c8;
  }

  .tab {
    height: 17px;
    padding: 0 7px 2px;
    border: 0;
    border-right: 1px solid var(--edge);
    background: #404040;
    color: #8d8d8d;
    line-height: 15px;
    white-space: nowrap;
  }

  .tab.current {
    background: var(--face);
    color: #ececec;
  }

  .dock .tabbar {
    padding-right: 5px;
  }

  .color {
    display: grid;
    grid-template-columns: 38px 1fr;
    height: 112px;
    padding: 10px 5px 0;
    border-top: 1px solid var(--shine);
  }

  .compact {
    margin: 0;
  }

  .channels {
    display: grid;
    align-content: start;
    gap: 5px;
  }

  .channel {
    display: flex;
    align-items: center;
    height: 20px;
    font-size: 12px;
  }

  .channel label {
    width: 11px;
    margin-right: 5px;
    padding-bottom: 2px;
  }

  .slide {
    display: grid;
    width: 81px;
    margin-right: 6px;
  }

  .ramp {
    height: 6px;
    border: 1px solid #8b8b8b;
  }

  .R .ramp {
    background: linear-gradient(90deg, #000, #f00);
  }

  .G .ramp {
    background: linear-gradient(90deg, #000, #0f0);
  }

  .B .ramp {
    background: linear-gradient(90deg, #000, #00f);
  }

  .slide input {
    appearance: none;
    width: 91px;
    height: 10px;
    margin: 0 -5px;
    background: none;
  }

  .slide input::-webkit-slider-thumb {
    appearance: none;
    width: 10px;
    height: 9px;
    background: linear-gradient(#777, #ccc);
    clip-path: polygon(50% 0, 100% 50%, 100% 100%, 0 100%, 0 50%);
  }

  .channel .field {
    width: 51px;
  }

  .spectrum {
    grid-column: 1 / -1;
    display: flex;
    width: 200px;
    height: 16px;
    margin-left: 1px;
    border: 1px solid #333;
  }

  .hues {
    flex: 1;
    background:
      linear-gradient(#fff, transparent 50%, #000),
      linear-gradient(90deg, #e81c24, #fff200 17%, #00a04e 33%, #00aeef 50%, #2c2f92 67%, #ec008c 83%, #e81c24);
  }

  .ends {
    width: 8px;
    background: linear-gradient(#fff 50%, #000 50%);
  }

  .adjust {
    height: 112px;
    padding: 3px 10px 0;
    border-top: 1px solid var(--shine);
    color: #fff;
  }

  .adjrow {
    display: flex;
    justify-content: center;
    gap: 8px;
    height: 27px;
    padding-right: 31px;
    color: var(--dim);
  }

  .adjust p {
    height: 20px;
  }

  .dock .layers {
    display: flex;
    flex-direction: column;
    flex: 1;
    min-height: 0;
    border: 0;
  }

  .line {
    display: flex;
    align-items: center;
    gap: 6px;
    height: 28px;
    flex: none;
    padding: 0 5px 1px;
    border-top: 1px solid var(--shine);
    border-bottom: 1px solid #3a3a3a;
    color: #a9a9a9;
    white-space: nowrap;
  }

  .line .drop {
    background: linear-gradient(#5e5e5e, #585858);
    box-shadow: none;
    border-color: #444;
  }

  .kind {
    width: 66px;
    padding-left: 4px;
  }

  .line .kind select {
    padding-left: 5px;
  }

  .blend {
    width: 111px;
  }

  .filters {
    display: flex;
    flex: 1;
    gap: 10px;
    padding-left: 15px;
    color: #939393;
  }

  .switch {
    width: 10px;
    height: 18px;
    padding: 0;
    border: 1px solid #3d3d3d;
    background: linear-gradient(#777 45%, #424242 45%);
  }

  .locks {
    display: flex;
    gap: 8px;
    padding-left: 3px;
    color: #939393;
  }

  .locklabel {
    padding-left: 2px;
  }

  .combo {
    display: flex;
    width: 56px;
    height: 20px;
    border: 1px solid #434343;
    border-radius: 2px;
  }

  .combo input {
    width: 35px;
    padding: 0;
    border: 0;
    background: #4b4b4b;
  }

  .combo button {
    display: grid;
    place-items: center;
    flex: 1;
    padding: 0;
    border: 0;
    border-left: 1px solid #434343;
    background: #5c5c5c;
    color: #a0a0a0;
  }

  .list {
    display: flex;
    justify-content: flex-end;
    flex: 1;
    min-height: 0;
    border-top: 1px solid #3a3a3a;
    background: var(--well);
  }

  .list.light {
    background: var(--face);
    border-top: 2px solid #3a3a3a;
  }

  .track {
    width: 16px;
    flex: none;
    background: linear-gradient(90deg, #3b3b3b, #454545);
  }

  .footer {
    display: flex;
    align-items: center;
    height: 20px;
    flex: none;
    padding-right: 3px;
    border-top: 2px solid #3a3a3a;
    box-shadow: inset 0 1px #666;
    background: var(--face);
    color: var(--dim);
  }

  .actions {
    display: flex;
    justify-content: flex-end;
    flex: 1;
    gap: 13px;
    padding-right: 15px;
  }

  .base {
    display: flex;
    align-items: center;
    justify-content: center;
    height: 8px;
    flex: none;
    border-top: 1px solid var(--edge);
    box-shadow: inset 0 1px #646464;
    background: var(--face);
  }

  /* Floating panels, placed on the canvas */
  .floating {
    position: absolute;
    display: flex;
    flex-direction: column;
    box-shadow: 0 0 0 1px #222, 0 0 6px #0008;
  }

  .history {
    top: 23px;
    right: 290px;
    width: 263px;
    height: 145px;
  }

  .cap {
    height: 4px;
    background: #383838;
    border-bottom: 1px solid var(--edge);
  }

  .history .actions {
    gap: 16px;
  }

  .bars {
    width: 3px;
    height: 11px;
    margin: 0 5px 0 2px;
    border: 1px solid #666;
    border-width: 0 1px;
  }

  .properties {
    top: 169px;
    right: 244px;
    width: 250px;
    height: 380px;
  }

  .properties p {
    height: 33px;
    padding: 8px 11px;
    border-top: 1px solid var(--shine);
    background: var(--face);
    color: #fff;
  }

  .timeline {
    right: 290px;
    bottom: 0;
    left: 121px;
    background: var(--face);
  }

  .timeline .base {
    height: 7px;
  }

  .timeline .tab {
    padding-bottom: 0;
  }

  .trow,
  .tfoot,
  .tbody {
    display: flex;
  }

  .head {
    height: 38px;
    border-top: 1px solid var(--shine);
    border-bottom: 1px solid #3a3a3a;
  }

  .tleft {
    display: flex;
    align-items: center;
    width: 280px;
    border-right: 1px solid #3a3a3a;
    color: var(--dim);
  }

  .transport {
    gap: 19px;
    padding-left: 9px;
  }

  .transport .rule {
    height: 32px;
    margin: 0 -10px 0 -3px;
  }

  .tmain {
    flex: 1;
  }

  .tend {
    display: grid;
    place-items: center;
    width: 28px;
    border-left: 1px solid #3a3a3a;
    color: #ddd;
  }

  .tend.wide {
    width: 44px;
  }

  .tcontent {
    flex: 1;
  }

  .media {
    height: 42px;
    border-bottom: 1px solid #3a3a3a;
  }

  .filmcell {
    justify-content: flex-end;
    padding-right: 8px;
    color: #ddd;
  }

  .filmcell .bare {
    gap: 1px;
  }

  .tempty {
    height: 23px;
    background: var(--well);
  }

  .tfoot {
    height: 20px;
    border-top: 1px solid #3a3a3a;
  }

  .frames {
    gap: 12px;
    padding-left: 6px;
  }

  .tzoom {
    display: flex;
    align-items: center;
    justify-content: space-between;
    width: 158px;
    padding: 0 6px 0 8px;
    color: var(--dim);
  }

  .groove {
    width: 88px;
    height: 5px;
    border: 1px solid #2d2d2d;
    border-radius: 3px;
    background: #3d3d3d;
  }

  .hscroll {
    flex: 1;
    background: linear-gradient(#393939, #454545);
  }

  .tcorner {
    display: grid;
    place-items: end center;
    width: 16px;
    color: var(--dim);
  }

  /* Progress dialog */
  .dialog {
    position: absolute;
    top: 244px;
    left: 699px;
    width: 521px;
    height: 99px;
    border: 1px solid #c38262;
    background: #ededed;
    box-shadow: 0 2px 10px #0009;
    color: #000;
  }

  .title {
    display: flex;
    align-items: center;
    justify-content: space-between;
    height: 31px;
    padding: 0 14px 2px 3px;
    background: #c38262;
    font-size: 16px;
  }

  .body {
    display: grid;
    gap: 9px;
    padding: 9px 11px 0 10px;
    font-size: 11px;
  }

  .jobrow {
    display: flex;
    align-items: center;
    gap: 9px;
  }

  progress {
    appearance: none;
    flex: 1;
    height: 21px;
    border: 1px solid #bcbcbc;
  }

  progress::-webkit-progress-bar {
    background: #e6e6e6;
  }

  progress::-webkit-progress-value {
    background: #06b025;
  }

  .jobrow button {
    width: 105px;
    height: 18px;
    padding: 0;
    border: 1px solid #adadad;
    background: #e1e1e1;
    line-height: 14px;
  }

  /* Taskbar */
  .taskbar {
    display: flex;
    height: 51px;
    flex: none;
    border-top: 1px solid #222;
    background: linear-gradient(90deg, #e4d8e2, #e5d7da 30%, #ecdcdb 47%, #efe2d8 56%, #eddfd5 80%, #ecdcdb 90%, #ece0d4);
    color: #000;
  }

  .start {
    width: 60px;
  }

  .search {
    display: flex;
    align-items: center;
    gap: 15px;
    width: 429px;
    padding-left: 14px;
    border: 1px solid #c8c8c8;
    background: #fff;
  }

  .search input {
    flex: 1;
    min-width: 0;
    padding: 0 0 2px;
    border: 0;
    font: 300 21px/28px "Noto Sans CJK KR", sans-serif;
  }

  .search input::placeholder {
    color: #222;
  }

  .app {
    width: 62px;
    border-bottom: 3px solid transparent;
    padding-top: 1px;
  }

  .search + .app {
    margin-right: 1px;
  }

  .running {
    background: linear-gradient(#c38262, #c38262) center bottom / 51px 3px no-repeat border-box;
  }

  .front {
    background: #f9f3f1;
    border-bottom-color: #c38262;
  }

  .tray {
    display: flex;
    align-items: center;
    gap: 12px;
  }

  .ime {
    width: 20px;
    height: 20px;
    margin-left: 4px;
    border: 1px solid #555;
    background: #fff;
    font-size: 16px;
    font-weight: 500;
  }

  .clock {
    display: flex;
    flex-direction: column;
    align-items: center;
    width: 119px;
    margin-right: 1px;
    font-size: 15px;
    line-height: 24px;
  }

  .notice {
    position: relative;
    width: 20px;
    margin-right: 25px;
  }

  .badge {
    position: absolute;
    top: 23px;
    left: 9px;
    width: 21px;
    height: 21px;
    border: 1px solid #888;
    border-radius: 50%;
    background: #ccc8c8;
    font: 700 15px/19px "Noto Sans", sans-serif;
    text-align: center;
  }

  .peek {
    width: 6px;
    border-left: 1px solid #b5aaa6;
  }
</style>
